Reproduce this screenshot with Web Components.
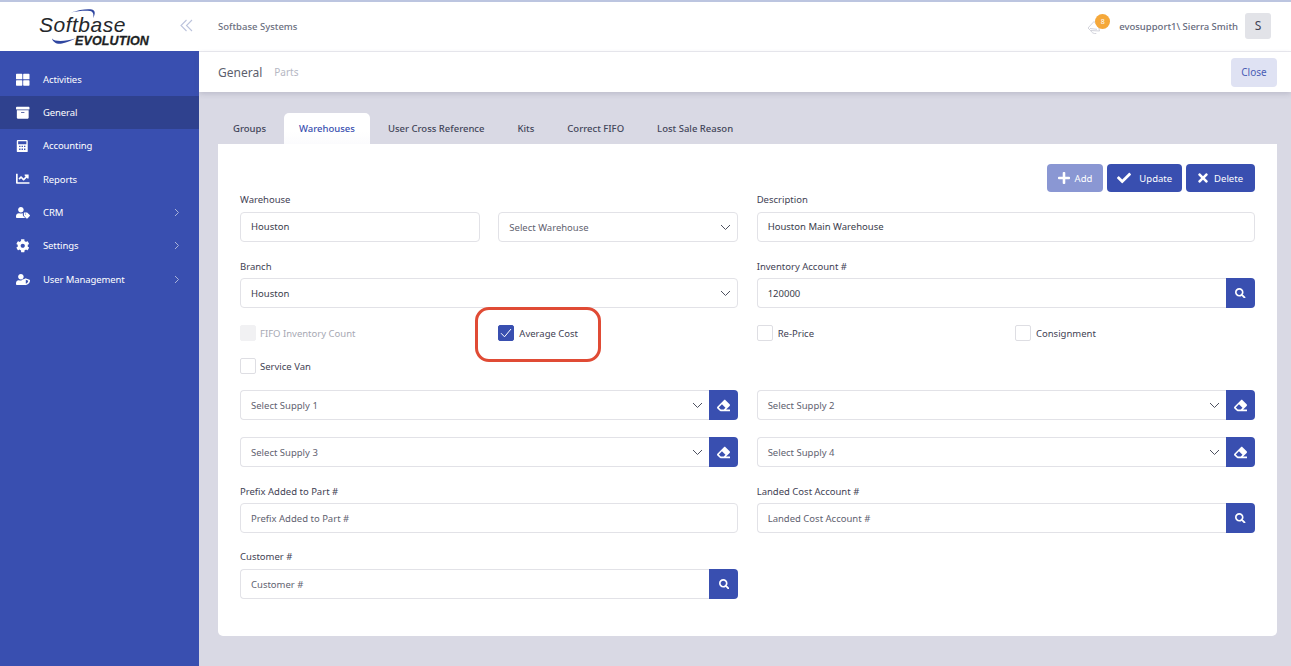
<!DOCTYPE html>
<html lang="en"><head><meta charset="utf-8"><title>Warehouses</title>
<style>
html,body{margin:0;height:100%;}
body{font-family:"Noto Sans",sans-serif;font-size:9.5px;color:#3f4254;overflow:hidden;}
</style></head><body>
<app-shell>
  <side-nav slot="side">
    <nav-item icon="grid">Activities</nav-item>
    <nav-item icon="archive" active>General</nav-item>
    <nav-item icon="calc">Accounting</nav-item>
    <nav-item icon="chart">Reports</nav-item>
    <nav-item icon="usertag" more>CRM</nav-item>
    <nav-item icon="cog" more>Settings</nav-item>
    <nav-item icon="usershield" more>User Management</nav-item>
  </side-nav>
  <top-bar slot="top"></top-bar>
  <page-bar slot="top"></page-bar>
  <tab-strip>
    <tab-item>Groups</tab-item><tab-item active>Warehouses</tab-item><tab-item>User Cross Reference</tab-item><tab-item>Kits</tab-item><tab-item>Correct FIFO</tab-item><tab-item>Lost Sale Reason</tab-item>
  </tab-strip>
  <form-card>
    <action-btn icon="plus" faded>Add</action-btn>
    <action-btn icon="check">Update</action-btn>
    <action-btn icon="times">Delete</action-btn>
  </form-card>
</app-shell>
<script>
const P={
grid:['0 0 512 512','M296 32h192c13.255 0 24 10.745 24 24v160c0 13.255-10.745 24-24 24H296c-13.255 0-24-10.745-24-24V56c0-13.255 10.745-24 24-24zm-80 0H24C10.745 32 0 42.745 0 56v160c0 13.255 10.745 24 24 24h192c13.255 0 24-10.745 24-24V56c0-13.255-10.745-24-24-24zM0 296v160c0 13.255 10.745 24 24 24h192c13.255 0 24-10.745 24-24V296c0-13.255-10.745-24-24-24H24c-13.255 0-24 10.745-24 24zm296 184h192c13.255 0 24-10.745 24-24V296c0-13.255-10.745-24-24-24H296c-13.255 0-24 10.745-24 24v160c0 13.255 10.745 24 24 24z'],
archive:['0 0 512 512','M32 448c0 17.7 14.3 32 32 32h384c17.7 0 32-14.3 32-32V160H32v288zm160-212c0-6.6 5.4-12 12-12h104c6.6 0 12 5.4 12 12v8c0 6.6-5.4 12-12 12H204c-6.6 0-12-5.4-12-12v-8zM480 32H32C14.3 32 0 46.3 0 64v48c0 8.8 7.2 16 16 16h480c8.8 0 16-7.2 16-16V64c0-17.7-14.3-32-32-32z'],
calc:['0 0 448 512','M400 0H48C22 0 0 22 0 48v416c0 26 22 48 48 48h352c26 0 48-22 48-48V48c0-26-22-48-48-48zM56 56h336v120H56V56zm40 176h56v56H96v-56zm0 112h56v64H96v-64zm100-112h56v56h-56v-56zm0 112h56v64h-56v-64zm100-112h56v56h-56v-56zm0 112h56v64h-56v-64z'],
chart:['0 0 512 512','M496 384H64V80c0-8.84-7.16-16-16-16H16C7.16 64 0 71.16 0 80v336c0 17.67 14.33 32 32 32h464c8.84 0 16-7.16 16-16v-32c0-8.84-7.16-16-16-16zM464 96H345.94c-21.38 0-32.09 25.85-16.97 40.97l32.4 32.4L288 242.75l-73.37-73.37c-12.5-12.5-32.76-12.5-45.25 0l-68.69 68.69c-6.25 6.25-6.25 16.38 0 22.63l22.62 22.62c6.25 6.25 16.38 6.25 22.63 0L192 237.25l73.37 73.37c12.5 12.5 32.76 12.5 45.25 0l96-96 32.4 32.4c15.12 15.12 40.97 4.41 40.97-16.97V112c0-8.84-7.16-16-16-16z'],
usertag:['0 0 640 512','M224 256c70.7 0 128-57.3 128-128S294.7 0 224 0 96 57.3 96 128s57.3 128 128 128zm90 32h-17c-22 10-47 16-73 16s-51-6-73-16h-17C60 288 0 348 0 422v42c0 26 22 48 48 48h352c9 0 17-2 24-7L330 411c-12-12-18-27-18-45v-78zM630 375L520 265c-6-6-14-9-23-9H376c-9 0-16 7-16 16v121c0 9 3 17 9 23l110 110c12 12 33 12 45 0l106-106c12-12 12-33 0-45zM440 352a24 24 0 1 1 0-48 24 24 0 0 1 0 48z'],
cog:['0 0 512 512','M487.4 315.7l-42.6-24.6c4.3-23.2 4.3-47 0-70.2l42.6-24.6c4.9-2.8 7.1-8.6 5.5-14-11.1-35.6-30-67.8-54.7-94.6-3.8-4.1-10-5.1-14.8-2.3L380.8 110c-17.9-15.4-38.5-27.3-60.8-35.1V25.8c0-5.6-3.9-10.5-9.4-11.7-36.7-8.2-74.3-7.8-109.2 0-5.5 1.2-9.4 6.1-9.4 11.7V75c-22.2 7.9-42.8 19.8-60.8 35.1L88.7 85.5c-4.9-2.8-11-1.9-14.8 2.3-24.7 26.7-43.6 58.9-54.7 94.6-1.7 5.4.6 11.2 5.5 14L67.3 221c-4.3 23.2-4.3 47 0 70.2l-42.6 24.6c-4.9 2.8-7.1 8.6-5.5 14 11.1 35.6 30 67.8 54.7 94.6 3.8 4.1 10 5.1 14.8 2.3l42.6-24.6c17.9 15.4 38.5 27.3 60.8 35.1v49.2c0 5.6 3.9 10.5 9.4 11.7 36.7 8.2 74.3 7.8 109.2 0 5.5-1.2 9.4-6.1 9.4-11.7v-49.2c22.2-7.9 42.8-19.8 60.8-35.1l42.6 24.6c4.9 2.8 11 1.9 14.8-2.3 24.7-26.7 43.6-58.9 54.7-94.6 1.5-5.5-.7-11.3-5.6-14.1zM256 336c-44.1 0-80-35.9-80-80s35.9-80 80-80 80 35.9 80 80-35.9 80-80 80z'],
usershield:['0 0 640 512','M224 256c70.7 0 128-57.3 128-128S294.7 0 224 0 96 57.3 96 128s57.3 128 128 128zm96 64c0-3 0-6 1-9-6-2-11-23-24-23h-17c-22 10-47 16-73 16s-51-6-73-16h-17C60 288 0 348 0 422v42c0 26 22 48 48 48h352c11 0 20-4 28-9-62-50-108-100-108-183zM622 270l-160-64c-9-3-18-3-28 0l-160 64c-11 5-18 16-18 30 0 107 62 172 178 212 9 3 18 3 28 0 116-40 178-105 178-212 0-14-7-25-18-30zM448 446V270l112 45c0 70-44 108-112 131z'],
plus:['0 0 448 512','M416 208H272V64c0-17.67-14.33-32-32-32h-32c-17.67 0-32 14.33-32 32v144H32c-17.67 0-32 14.33-32 32v32c0 17.67 14.33 32 32 32h144v144c0 17.67 14.33 32 32 32h32c17.67 0 32-14.33 32-32V304h144c17.67 0 32-14.33 32-32v-32c0-17.67-14.33-32-32-32z'],
check:['0 0 512 512','M173.898 439.404l-166.4-166.4c-9.997-9.997-9.997-26.206 0-36.204l36.203-36.204c9.997-9.998 26.207-9.998 36.204 0L192 312.69 432.095 72.596c9.997-9.997 26.207-9.997 36.204 0l36.203 36.204c9.997 9.997 9.997 26.206 0 36.204l-294.4 294.401c-9.998 9.997-26.207 9.997-36.204-.001z'],
times:['0 0 352 512','M242.72 256l100.07-100.07c12.28-12.28 12.28-32.19 0-44.48l-22.24-22.24c-12.28-12.28-32.19-12.28-44.48 0L176 189.28 75.93 89.21c-12.28-12.28-32.19-12.28-44.48 0L9.21 111.45c-12.28 12.28-12.28 32.19 0 44.48L109.28 256 9.21 356.07c-12.28 12.28-12.28 32.19 0 44.48l22.24 22.24c12.28 12.28 32.2 12.28 44.48 0L176 322.72l100.07 100.07c12.28 12.28 32.2 12.28 44.48 0l22.24-22.24c12.28-12.28 12.28-32.19 0-44.48L242.72 256z'],
search:['0 0 512 512','M505 442.7L405.3 343c-4.5-4.5-10.6-7-17-7H372c27.6-35.3 44-79.7 44-128C416 93.1 322.9 0 208 0S0 93.1 0 208s93.1 208 208 208c48.3 0 92.7-16.4 128-44v16.3c0 6.4 2.5 12.5 7 17l99.7 99.7c9.4 9.4 24.6 9.4 33.9 0l28.3-28.3c9.4-9.4 9.4-24.6.1-34zM208 336c-70.7 0-128-57.2-128-128 0-70.7 57.2-128 128-128 70.7 0 128 57.2 128 128 0 70.7-57.2 128-128 128z'],
eraser:['0 0 512 512','M497.941 273.941c18.745-18.745 18.745-49.137 0-67.882l-160-160c-18.745-18.745-49.136-18.746-67.883 0l-256 256c-18.745 18.745-18.745 49.137 0 67.882l96 96A48.004 48.004 0 0 0 144 480h356c6.627 0 12-5.373 12-12v-40c0-6.627-5.373-12-12-12H355.883l142.058-142.059zm-302.627-62.627l137.373 137.373L265.373 416H150.628l-80-80 124.686-124.686z']
};
const svg=(n,w,h)=>`<svg width="${w}" height="${h||w}" viewBox="${P[n][0]}" fill="currentColor" style="display:block"><path d="${P[n][1]}"/></svg>`;
const chev=`<svg width="11" height="7" viewBox="0 0 11 7" fill="none" stroke="#4d5160" stroke-width="1" style="display:block"><path d="M1 1l4.500 4.500L10 1"/></svg>`;
const def=(name,fn)=>customElements.define(name,class extends HTMLElement{constructor(){super();this.attachShadow({mode:'open'});}connectedCallback(){this.shadowRoot.innerHTML=fn(this);}});

def('app-shell',()=>`<style>
:host{display:grid;grid-template-columns:199px 1fr;height:666px;width:1291px;background:#d9d9e4;}
.s{display:flex;flex-direction:column;background:#394fb0;min-height:0}
.m{display:flex;flex-direction:column;min-width:0}
.c{padding:21px 14px 0 19px}
</style>
<div class="s"><slot name="side"></slot></div>
<div class="m"><slot name="top"></slot><div class="c"><slot></slot></div></div>`);

def('side-nav',()=>`<style>
:host{display:block;flex:1}
.l{height:49px;background:#fff;border-top:2px solid #bcc5e0;position:relative}
.a{position:absolute;left:39px;top:14px;font:italic 400 21px/18px "Liberation Sans",sans-serif;letter-spacing:.5px;color:#25272c}
.b{position:absolute;left:75px;top:33px;font:italic 700 12.5px/12px "Liberation Sans",sans-serif;letter-spacing:.12px;color:#1d1f24;-webkit-text-stroke:.3px #1d1f24}
.sw{position:absolute;left:0;top:-2px}
.col{position:absolute;left:180px;top:17px;color:#bcc3dc}
.n{padding-top:11.6px}
</style>
<div class="l">
<svg class="sw" width="110" height="51" viewBox="0 0 110 51" fill="#2f46a0"><path d="M71 12.500C79 9.500 88 8.500 92 9.500 95.500 10.500 95.500 14 93 18 94 14 93 11.500 90 11 85 10.300 78 11 71 12.500Z"/><path d="M52 38.500C53 42.500 57 44.500 62 43.500 67 42.500 72 40.500 76 38.300 70 40 65 41 60.500 41 56.500 41 53.500 40.300 52 38.500Z"/></svg>
<span class="a">Softbase</span><span class="b">EVOLUTION</span>
<svg class="col" width="13" height="13" viewBox="0 0 13 13" fill="none" stroke="currentColor" stroke-width="1.1"><path d="M6.500 1L1 6.500 6.500 12M12 1L6.500 6.500 12 12"/></svg>
</div><div class="n"><slot></slot></div>`);

def('nav-item',e=>{const ic=e.getAttribute('icon');return `<style>
:host{display:flex;align-items:center;height:33.33px;padding-left:16px;color:#fff;font-size:9.5px;letter-spacing:-.1px;position:relative;background:${e.hasAttribute('active')?'#2f418e':'transparent'}}
.i{width:14px;display:flex;margin-right:13px}
.c{position:absolute;left:174px;top:12px}
</style><span class="i">${svg(ic,ic=='calc'?12.500:ic.startsWith('user')?17:13.500)}</span><slot></slot>${e.hasAttribute('more')?`<svg class="c" width="6" height="9" viewBox="0 0 6 9" fill="none" stroke="#a9b3da" stroke-width="1"><path d="M1 1l3.500 3.500L1 8"/></svg>`:''}`});

def('top-bar',()=>`<style>
:host{display:flex;align-items:center;height:48px;background:#fff;border-top:2px solid #bcc5e0;border-bottom:1px solid #ebebf0;padding:0 20px 1px 19px;font-size:9.5px}
.t{color:#6c7080;font-weight:500}
.r{margin-left:auto;display:flex;align-items:center}
.bell{position:relative;width:24px;height:24px;margin-right:8px}
.bd{position:absolute;left:8px;top:0;width:15px;height:15px;border-radius:50%;background:#f5a83a;color:#fff;font-size:7px;line-height:15px;text-align:center}
.u{color:#666a7c;font-weight:500}
.av{width:26px;height:26px;border-radius:3px;background:#e2e3e8;color:#3f4254;text-align:center;line-height:26px;font-size:12px;margin-left:7px}
</style><span class="t">Softbase Systems</span><div class="r"><div class="bell">
<svg width="14" height="15" viewBox="0 0 14 15" fill="none" stroke="#c6c8d2" stroke-width=".8" style="position:absolute;left:0;top:6px"><path d="M1 8L7 1.500 11.500 6.500 12.500 11 3.500 10.500Z"/><path d="M3 8.500l7 .8M3.800 10.500c.5 2 3 3.500 5.500 3"/></svg>
<span class="bd">8</span></div><span class="u">evosupport1\\ Sierra Smith</span><span class="av">S</span></div>`);

def('page-bar',()=>`<style>
:host{display:flex;align-items:center;height:40px;background:#fff;padding:0 14px 0 19px;box-shadow:0 2px 5px rgba(90,90,120,.22);position:relative}
.g{font-size:12px;color:#5c5f6e}.p{font-size:10px;color:#b5b7c3;margin-left:12px}
.b{margin-left:auto;width:46px;height:29px;border-radius:4px;background:#dfe2f3;color:#4a5db5;font-size:10px;display:flex;align-items:center;justify-content:center}
</style><span class="g">General</span><span class="p">Parts</span><span class="b">Close</span>`);

def('tab-strip',()=>`<style>:host{display:flex;height:31px;gap:3px}</style><slot></slot>`);
def('tab-item',e=>`<style>
:host{display:flex;align-items:center;height:31px;padding:0 15px;font-size:9.5px;font-weight:500;border-radius:5px 5px 0 0;color:${e.hasAttribute('active')?'#394fb0':'#43465a'};background:${e.hasAttribute('active')?'linear-gradient(#fff 60%,#fbfbfd)':'transparent'}}
</style><slot></slot>`);

const BTN={plus:{p:'0 11px 0 11px',g:5,w:12,h:14},check:{p:'0 10px',g:8,w:14,h:14},times:{p:'0 12px 0 12px',g:6,w:10,h:14}};
def('action-btn',e=>{const b=BTN[e.getAttribute('icon')];return `<style>
:host{display:flex;align-items:center;height:28px;border-radius:4px;background:${e.hasAttribute('faded')?'#8a97d3':'#394fb0'};color:#fff;font-size:9.5px;padding:${b.p};gap:${b.g}px}
</style>${svg(e.getAttribute('icon'),b.w,b.h)}<slot></slot>`});

def('form-card',()=>`<style>
:host{display:block;background:#fff;border-radius:0 0 5px 5px;height:492px;padding:20px 22px 0;box-sizing:border-box}
.a{display:flex;justify-content:flex-end;gap:4px;height:28px}
.g{display:grid;grid-template-columns:repeat(4,240px);column-gap:18.33px}
</style>
<div class="a"><slot></slot></div>
<div class="g" style="--lh:20px">
 <f-ield label="Warehouse"><t-box value="Houston" hi></t-box></f-ield>
 <f-ield><s-box text="Select Warehouse"></s-box></f-ield>
 <f-ield class="s2" label="Description"><t-box value="Houston Main Warehouse" hi></t-box></f-ield>
</div>
<div class="g" style="margin-top:17px;--lh:19px">
 <f-ield class="s2" label="Branch"><s-box text="Houston" dark></s-box></f-ield>
 <f-ield class="s2" label="Inventory Account #"><t-box value="120000" btn="search"></t-box></f-ield>
</div>
<div class="g" style="margin-top:17px;height:16px">
 <c-box disabled tight>FIFO Inventory Count</c-box>
 <c-box checked>Average Cost</c-box>
 <c-box>Re-Price</c-box>
 <c-box>Consignment</c-box>
</div>
<div class="g" style="margin-top:17px;height:16px"><c-box tight>Service Van</c-box></div>
<div class="g" style="margin-top:16px">
 <s-box class="s2" text="Select Supply 1" btn></s-box><s-box class="s2" text="Select Supply 2" btn></s-box>
</div>
<div class="g" style="margin-top:17px">
 <s-box class="s2" text="Select Supply 3" btn></s-box><s-box class="s2" text="Select Supply 4" btn></s-box>
</div>
<div class="g" style="margin-top:17px;--lh:19px">
 <f-ield class="s2" label="Prefix Added to Part #"><t-box ph="Prefix Added to Part #"></t-box></f-ield>
 <f-ield class="s2" label="Landed Cost Account #"><t-box ph="Landed Cost Account #" btn="search"></t-box></f-ield>
</div>
<div class="g" style="margin-top:16px;--lh:20px">
 <f-ield class="s2" label="Customer #"><t-box ph="Customer #" btn="search"></t-box></f-ield>
</div>`);

def('f-ield',e=>`<style>:host{display:block}${e.classList.contains('s2')?':host{grid-column:span 2}':''}
.l{height:var(--lh,20px);line-height:16px;font-size:9.5px;color:#3f4254}</style><div class="l">${e.getAttribute('label')||''}</div><slot></slot>`);

const boxCss=`.w{display:flex;height:30px}.b{flex:1;min-width:0;box-sizing:border-box;height:30px;border:1px solid #e2e2e7;padding:0 10px;display:flex;align-items:center;font-size:9.5px;color:#3a3d4c;border-radius:4px}
.b.j{border-radius:4px 0 0 4px;border-right:0}
.k{width:29px;height:30px;background:#394fb0;color:#fff;border-radius:0 4px 4px 0;display:flex;align-items:center;justify-content:center}`;
def('t-box',e=>{const v=e.getAttribute('value'),b=e.getAttribute('btn');return `<style>:host{display:block}${boxCss}.ph{color:#5f6270}${e.hasAttribute('hi')?'.b{padding-bottom:2px}':''}</style><div class="w"><div class="b ${b?'j':''}"><span class="${v?'':'ph'}">${v||e.getAttribute('ph')}</span></div>${b?`<div class="k">${svg(b,10.500)}</div>`:''}</div>`});
def('s-box',e=>{const b=e.hasAttribute('btn');return `<style>:host{display:block}${e.classList.contains('s2')?':host{grid-column:span 2}':''}${boxCss}.b{justify-content:space-between;padding-right:6px;color:${e.hasAttribute('dark')?'#3a3d4c':'#5f6270'}}</style><div class="w"><div class="b ${b?'j':''}"><span>${e.getAttribute('text')}</span>${chev}</div>${b?`<div class="k">${svg('eraser',13)}</div>`:''}</div>`});

def('c-box',e=>{const d=e.hasAttribute('disabled'),c=e.hasAttribute('checked');return `<style>
:host{display:flex;align-items:center;height:16px;font-size:9.5px;color:${d?'#a7a9b3':'#3f4254'};position:relative}
.x{width:14px;height:14px;border:1px solid ${c?'#394fb0':d?'#f1f1f3':'#dedee3'};background:${c?'#394fb0':d?'#f1f1f3':'#fff'};border-radius:2px;margin-right:${e.hasAttribute('tight')?4:5}px;display:flex;align-items:center;justify-content:center}
.ring{position:absolute;left:-23px;top:-18px;width:126px;height:55px;border:3px solid #e04b35;border-radius:14px;box-sizing:border-box;pointer-events:none}
</style><span class="x">${c?`<svg width="12" height="10" viewBox="0 0 12 10" fill="none" stroke="#fff" stroke-width="1"><path d="M1 5.200l3.500 3.600L11 1"/></svg>`:''}</span><slot></slot>${c?'<span class="ring"></span>':''}`});
</script>
</body></html>
